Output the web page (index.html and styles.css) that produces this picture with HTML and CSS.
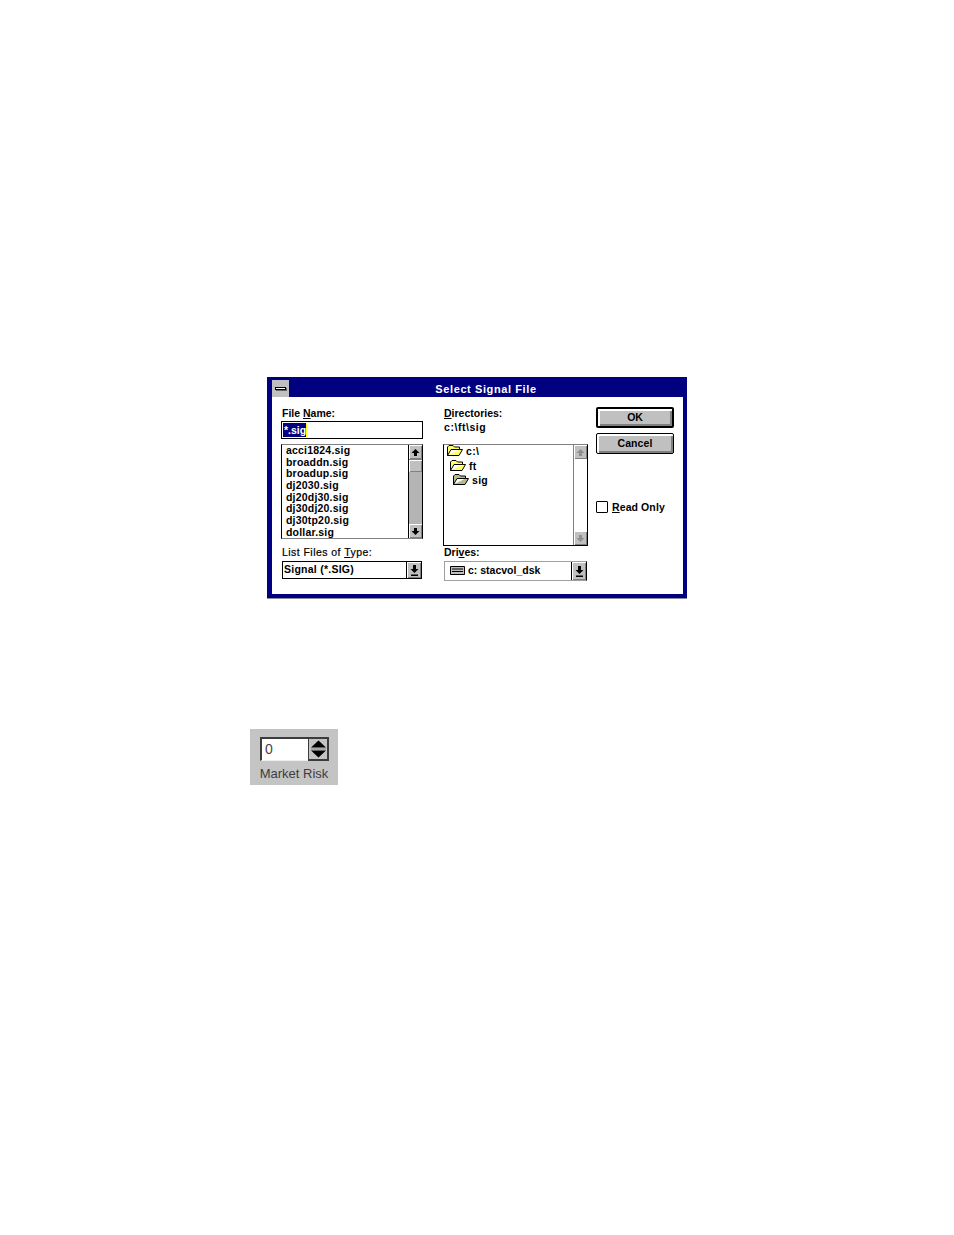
FILE: index.html
```html
<!DOCTYPE html>
<html lang="en">
<head>
<meta charset="utf-8">
<title>Select Signal File</title>
<link rel="stylesheet" href="styles.css">
</head>
<body>
<svg class="defs" width="0" height="0" aria-hidden="true">
  <symbol id="up" viewBox="0 0 9 9"><path d="M4.5 1 8.5 5H6V8H3V5H.5Z"/></symbol>
  <symbol id="down" viewBox="0 0 9 9"><path d="M3 1H6V4H8.5L4.5 8 .5 4H3Z"/></symbol>
  <symbol id="drop" viewBox="0 0 9 11"><path d="M3 0H6V4H8.5L4.5 8 .5 4H3ZM1 9.5H8V11H1Z"/></symbol>
  <symbol id="folder" viewBox="0 0 16 12"><path d="M.5 10.5V2L2 .5H6L7.5 2H12.5V4.5H4L.5 10.5H12L15.5 4.5H12.5" fill="#ffff66" stroke="#000"/></symbol>
  <symbol id="folder-grey" viewBox="0 0 16 12"><path d="M.5 10.5V2L2 .5H6L7.5 2H12.5V4.5H4L.5 10.5H12L15.5 4.5H12.5" fill="#b8b890" stroke="#000"/></symbol>
  <symbol id="disk" viewBox="0 0 15 9"><path d="M.5.5H14.5V8.5H.5Z" fill="#c0c0c0" stroke="#000"/><path d="M2 3H13M2 5.5H13" stroke="#000"/></symbol>
</svg>

<main class="page">
  <section class="dialog">
    <header class="titlebar">
      <div class="sysmenu"><span class="sysbar"></span></div>
      <h1 class="title">Select Signal File</h1>
    </header>
    <div class="content">
      <div class="col col-files">
        <div class="label label-top">File <u>N</u>ame:</div>
        <div class="field"><span class="selection">*.sig</span><span class="caret"></span></div>
        <div class="listbox listbox-files">
          <ul class="items">
            <li>acci1824.sig</li>
            <li>broaddn.sig</li>
            <li>broadup.sig</li>
            <li>dj2030.sig</li>
            <li>dj20dj30.sig</li>
            <li>dj30dj20.sig</li>
            <li>dj30tp20.sig</li>
            <li>dollar.sig</li>
          </ul>
          <div class="scrollbar">
            <div class="sbtn"><svg class="arrow"><use href="#up"/></svg></div>
            <div class="thumb"></div>
            <div class="track"></div>
            <div class="sbtn"><svg class="arrow"><use href="#down"/></svg></div>
          </div>
        </div>
        <div class="label label-type">List Files of <u>T</u>ype:</div>
        <div class="combo combo-type">
          <span class="combo-text">Signal (*.SIG)</span>
          <div class="dropbtn"><svg class="droparrow"><use href="#drop"/></svg></div>
        </div>
      </div>

      <div class="col col-dirs">
        <div class="label label-dirs"><u>D</u>irectories:</div>
        <div class="label path">c:\ft\sig</div>
        <div class="listbox listbox-dirs">
          <ul class="tree">
            <li class="tree-root"><svg class="folder"><use href="#folder"/></svg>c:\</li>
            <li class="tree-ft"><svg class="folder"><use href="#folder"/></svg>ft</li>
            <li class="tree-sig"><svg class="folder"><use href="#folder-grey"/></svg>sig</li>
          </ul>
          <div class="scrollbar scrollbar-off">
            <div class="sbtn"><svg class="arrow"><use href="#up"/></svg></div>
            <div class="track"></div>
            <div class="sbtn"><svg class="arrow"><use href="#down"/></svg></div>
          </div>
        </div>
        <div class="label label-drives">Dri<u>v</u>es:</div>
        <div class="combo combo-drive">
          <svg class="disk"><use href="#disk"/></svg>
          <span class="combo-text">c: stacvol_dsk</span>
          <div class="dropbtn"><svg class="droparrow"><use href="#drop"/></svg></div>
        </div>
      </div>

      <div class="col col-actions">
        <button class="btn btn-default" type="button">OK</button>
        <button class="btn btn-cancel" type="button">Cancel</button>
        <div class="check"><span class="checkbox"></span><span class="check-label"><u>R</u>ead Only</span></div>
      </div>
    </div>
  </section>

  <section class="spinner">
    <div class="spin-row">
      <div class="spin-input">0</div>
      <div class="spin-btn">
        <svg viewBox="0 0 17 20" width="17" height="20"><path d="M8.5 1.5 16 8.5H1ZM1 11.5H16L8.5 18.5Z" fill="#000"/><path d="M1 10H16" stroke="#8a8a8a"/></svg>
      </div>
    </div>
    <div class="spin-label">Market Risk</div>
  </section>
</main>
</body>
</html>
```
FILE: styles.css
```css
html, body {
  margin: 0;
  padding: 0;
  background: #fff;
}
.defs { position: absolute; }
.page {
  width: 954px;
  height: 1235px;
  padding: 377px 0 0 250px;
  box-sizing: border-box;
  font-family: "Liberation Sans", Arial, sans-serif;
  overflow: hidden;
}

/* dialog window */
.dialog {
  width: 420px;
  height: 221px;
  margin-left: 17px;
  box-sizing: border-box;
  border: solid #000080;
  border-width: 3px 4px 4px 5px;
  box-shadow: 0 1px 0 #8a8a9a;
  background: #fff;
  display: flex;
  flex-direction: column;
}
.titlebar {
  height: 17px;
  background: #000080;
  display: flex;
  flex: none;
}
.sysmenu {
  width: 17px;
  height: 17px;
  background: #c0c0c0;
  display: flex;
  align-items: center;
  justify-content: center;
}
.sysbar {
  width: 11px;
  height: 3px;
  background: #fff;
  border: 1px solid #000;
  box-sizing: border-box;
  box-shadow: 1px 1px 0 #666;
}
.title {
  flex: 1;
  margin: 0;
  color: #fff;
  font-size: 11px;
  font-weight: 700;
  line-height: 19px;
  letter-spacing: .6px;
  text-align: center;
}
.content {
  flex: 1;
  display: flex;
  padding-left: 9px;
  color: #000;
  font-size: 10.5px;
  font-weight: 700;
  letter-spacing: .2px;
}
.col { display: flex; flex-direction: column; }
.col-files { width: 142px; padding-top: 10px; }
.col-dirs { width: 145px; margin-left: 20px; padding-top: 10px; }
.col-actions { width: 78px; margin-left: 8px; padding-top: 10px; }

.label { height: 14px; line-height: 12px; padding-left: 1px; white-space: nowrap; }
.label-top { letter-spacing: 0; }
.label-type { margin-top: 6px; height: 16px; line-height: 14px; font-weight: 400; letter-spacing: .45px; -webkit-text-stroke: .2px #000; }
.label-dirs { padding-left: 1px; height: 13px; line-height: 12px; letter-spacing: 0; }
.path { margin-bottom: 10px; height: 14px; line-height: 14px; letter-spacing: .55px; }
.label-drives { height: 15px; line-height: 12px; letter-spacing: 0; }

/* text field */
.field {
  height: 18px;
  box-sizing: border-box;
  border: 1px solid #000;
  padding: 1px 0 0 1px;
  display: flex;
}
.selection {
  width: 23px;
  height: 14px;
  background: #000080;
  color: #fff;
  line-height: 14px;
  padding-left: 1px;
  box-sizing: border-box;
  letter-spacing: 0;
  white-space: nowrap;
}
.caret { width: 1px; height: 14px; background: #ffff00; }

/* list boxes */
.listbox {
  box-sizing: border-box;
  border: 1px solid #000;
  display: flex;
  margin-top: 5px;
}
.listbox-files { height: 95px; border-color: #808080 #000 #808080 #000; }
.listbox-dirs { height: 102px; margin-top: 0; border-color: #808080 #000 #000 #000; }
.items, .tree {
  flex: 1;
  margin: 0;
  padding: 0;
  list-style: none;
  overflow: hidden;
}
.items { padding: 0 0 0 4px; }
.items li { height: 11.7px; line-height: 11.7px; white-space: nowrap; }

.tree { padding-top: 0; margin-top: -1px; letter-spacing: .3px; }
.tree li { height: 14.6px; display: flex; align-items: center; white-space: nowrap; }
.folder { width: 16px; height: 12px; margin-right: 3px; flex: none; }
.tree-root { padding-left: 3px; }
.tree-ft { padding-left: 6px; }
.tree-sig { padding-left: 9px; }

/* scrollbars */
.scrollbar {
  width: 14px;
  display: flex;
  flex-direction: column;
  flex: none;
  border-left: 1px solid #000;
  box-sizing: border-box;
}
.sbtn {
  height: 14px;
  flex: none;
  background: #c0c0c0;
  box-shadow: inset 1px 1px 0 #fff, inset -1px -1px 0 #808080;
  display: flex;
  align-items: center;
  justify-content: center;
}
.arrow { width: 9px; height: 9px; }
.thumb {
  height: 13px;
  flex: none;
  background: #c0c0c0;
  border-top: 1px solid #808080;
  box-sizing: border-box;
  box-shadow: inset 1px 1px 0 #fff, inset -1px -1px 0 #808080;
}
.track { flex: 1; background: #b4b4b4; }
.scrollbar-off { border-left-color: #808080; }
.scrollbar-off .track { background: #fff; }
.scrollbar-off .arrow { fill: #8f8f8f; }

/* combos */
.combo {
  box-sizing: border-box;
  border: 1px solid #000;
  display: flex;
  align-items: center;
}
.combo-type { width: 140px; height: 18px; margin-left: 1px; }
.combo-drive {
  width: 143px;
  height: 20px;
  margin-left: 1px;
  border-color: #a0a0a0 #000 #a0a0a0 #a0a0a0;
}
.combo-text { flex: 1; padding-left: 1px; white-space: nowrap; padding-bottom: 2px; letter-spacing: .25px; }
.combo-drive .combo-text { padding-left: 3px; letter-spacing: 0; }
.disk { width: 15px; height: 9px; margin-left: 5px; flex: none; margin-bottom: 2px; }
.dropbtn {
  width: 14px;
  align-self: stretch;
  flex: none;
  border-left: 1px solid #000;
  background: #c0c0c0;
  box-shadow: inset 1px 1px 0 #fff, inset -1px -1px 0 #808080;
  display: flex;
  align-items: center;
  justify-content: center;
}
.droparrow { width: 9px; height: 11px; }

/* buttons */
.btn {
  width: 78px;
  height: 21px;
  padding: 0 0 2px;
  background: #c0c0c0;
  border: 1px solid #000;
  border-radius: 2px;
  font: inherit;
  letter-spacing: .1px;
  color: #000;
  box-shadow: inset 1px 1px 0 #fff, inset 2px 2px 0 #fff, inset -1px -1px 0 #808080, inset -2px -2px 0 #808080;
}
.btn-default { border-width: 2px; letter-spacing: 0; }
.btn-cancel { margin-top: 5px; }
.check {
  display: flex;
  align-items: center;
  margin-top: 47px;
  height: 12px;
}
.checkbox {
  width: 12px;
  height: 12px;
  box-sizing: border-box;
  border: 1px solid #000;
  background: #fff;
  border-radius: 1px;
  margin-right: 4px;
}
.check-label { white-space: nowrap; letter-spacing: .1px; }

/* spinner */
.spinner {
  width: 88px;
  height: 56px;
  margin-top: 131px;
  background: #c4c4c4;
  box-sizing: border-box;
  padding: 8px 0 0 10px;
}
.spin-row { display: flex; height: 24px; }
.spin-input {
  width: 48px;
  box-sizing: border-box;
  background: #fff;
  border: solid #3c3c3c;
  border-width: 2px 0 0 2px;
  border-bottom: 1px solid #eee;
  font-size: 14px;
  line-height: 21px;
  padding-left: 3px;
  color: #444;
}
.spin-btn {
  width: 21px;
  box-sizing: border-box;
  border: 2px solid #3c3c3c;
  border-left-width: 1px;
  background: #c4c4c4;
}
.spin-btn svg { display: block; margin: 0 auto; }
.spin-label {
  margin-left: -10px;
  margin-top: 5px;
  text-align: center;
  font-size: 13px;
  line-height: 16px;
  color: #3c3c3c;
}
```
